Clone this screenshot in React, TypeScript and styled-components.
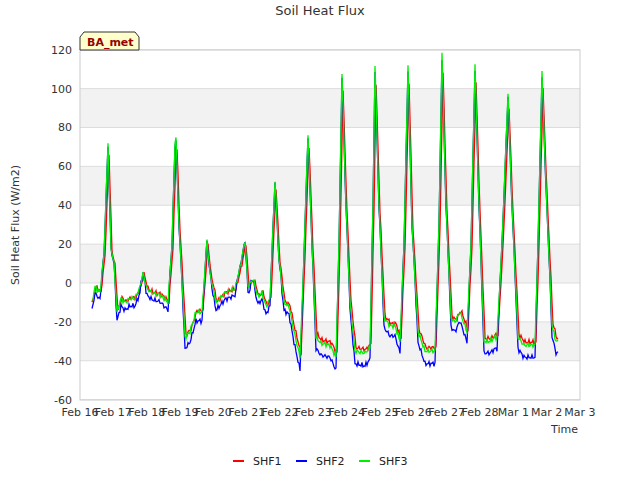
import styled, { createGlobalStyle } from 'styled-components';

const GlobalStyle = createGlobalStyle`
  body { margin: 0; background: #fff; font-family: "DejaVu Sans", sans-serif; }
`;

const Frame = styled.div`
  width: 640px;
  height: 480px;
`;

const KEYS: [number, number][] = [
  [92, -10], [95, -2], [100, -5], [104, 15], [108, 72], [111, 18], [114, 10], [117, -15], [121, -8], [125, -10],
  [130, -8], [135, -8], [140, -2], [143, 5], [147, -3], [152, -5], [160, -6], [168, -10], [172, 20], [175, 72],
  [176, 75], [179, 30], [185, -28], [190, -25], [196, -15], [202, -15], [207, 22], [210, 5], [216, -10], [225, -5],
  [235, -3], [240, 8], [245, 22], [248, -2], [253, 2], [258, -7], [262, -5], [266, -12], [270, -8], [275, 53],
  [279, 12], [284, -10], [289, -12], [294, -25], [300, -38], [303, 0], [308, 77], [312, 20], [316, -28], [321, -31],
  [330, -32], [336, -38], [339, 20], [342, 108], [346, 40], [350, -10], [355, -35], [365, -36], [370, -33], [373, 40],
  [375, 112], [379, 40], [384, -18], [390, -22], [395, -22], [400, -30], [404, 20], [408, 112], [412, 30], [418, -25],
  [425, -35], [435, -35], [439, 30], [442, 118], [446, 40], [451, -18], [455, -20], [460, -15], [467, -25], [471, 20],
  [475, 112], [479, 40], [484, -30], [490, -30], [495, -28], [497, -28], [502, 20], [508, 98], [512, 40], [518, -28],
  [524, -32], [535, -32], [538, 20], [542, 108], [546, 50], [552, -22], [556, -30], [558, -30],
];

const yPix = (v: number) => 283 - v * 1.944;

function series(shift: number, peakScale: number, minScale: number, minOff: number, seed: number) {
  const pts: string[] = [];
  for (let x = 92; x <= 558; x += 1) {
    const xs = x - shift;
    let i = 0;
    while (i < KEYS.length - 2 && KEYS[i + 1][0] < xs) i++;
    const [x0, v0] = KEYS[i];
    const [x1, v1] = KEYS[i + 1];
    const t = Math.min(1, Math.max(0, (xs - x0) / (x1 - x0)));
    let v = v0 + (v1 - v0) * t;
    v = v > 0 ? v * peakScale : v * minScale + minOff;
    v += Math.sin(x * 1.7 + seed) * 0.8 + Math.sin(x * 3.1 + seed * 2) * 0.6;
    pts.push(`${x},${yPix(v).toFixed(1)}`);
  }
  return pts.join(' ');
}

const yTicks = [120, 100, 80, 60, 40, 20, 0, -20, -40, -60];
const xLabels = ['Feb 16', 'Feb 17', 'Feb 18', 'Feb 19', 'Feb 20', 'Feb 21', 'Feb 22', 'Feb 23', 'Feb 24', 'Feb 25', 'Feb 26', 'Feb 27', 'Feb 28', 'Mar 1', 'Mar 2', 'Mar 3'];

export default function App() {
  const lines = [
    { c: '#ff0000', p: series(1, 0.92, 0.95, 0, 1) },
    { c: '#0000ff', p: series(0, 0.98, 1.1, -3, 2) },
    { c: '#00ee00', p: series(0, 1, 1, 0, 3) },
  ];
  return (
    <Frame>
      <GlobalStyle />
      <svg width="640" height="480" fontFamily="DejaVu Sans, sans-serif">
        <text x="320" y="15" textAnchor="middle" fontSize="13" fill="#333">Soil Heat Flux</text>
        <rect x="80" y="50" width="500" height="350" fill="#fff" />
        {[100, 60, 20, -20].map(v => (
          <rect key={v} x="80" y={yPix(v)} width="500" height={20 * 1.944} fill="#f2f2f2" />
        ))}
        {yTicks.map(v => (
          <g key={v}>
            <line x1="80" x2="580" y1={yPix(v)} y2={yPix(v)} stroke="#ddd" />
            <text x="72" y={yPix(v) + 4} textAnchor="end" fontSize="11" fill="#333">{v}</text>
          </g>
        ))}
        <rect x="80" y="50" width="500" height="350" fill="none" stroke="#ccc" />
        {xLabels.map((l, i) => (
          <text key={l} x={80 + i * 33.33} y="416" textAnchor="middle" fontSize="11" fill="#333">{l}</text>
        ))}
        <text x="578" y="433" textAnchor="end" fontSize="11" fill="#333">Time</text>
        <text x="19" y="225" textAnchor="middle" fontSize="11" fill="#333" transform="rotate(-90 19 225)">Soil Heat Flux (W/m2)</text>
        {lines.map(l => (
          <polyline key={l.c} points={l.p} fill="none" stroke={l.c} strokeWidth="1.3" />
        ))}
        <path d="M80,50 L80,37 L84,32 L135,32 L139,37 L139,50 Z" fill="#ffffcc" stroke="#333" />
        <text x="87" y="46" fontSize="11" fontWeight="bold" fill="#990000">BA_met</text>
        {[['#ff0000', 'SHF1', 233], ['#0000ff', 'SHF2', 296], ['#00ee00', 'SHF3', 359]].map(([c, n, x]) => (
          <g key={n as string}>
            <line x1={x as number} x2={(x as number) + 11} y1="461" y2="461" stroke={c as string} strokeWidth="2" />
            <text x={(x as number) + 20} y="465" fontSize="11" fill="#222">{n}</text>
          </g>
        ))}
      </svg>
    </Frame>
  );
}
